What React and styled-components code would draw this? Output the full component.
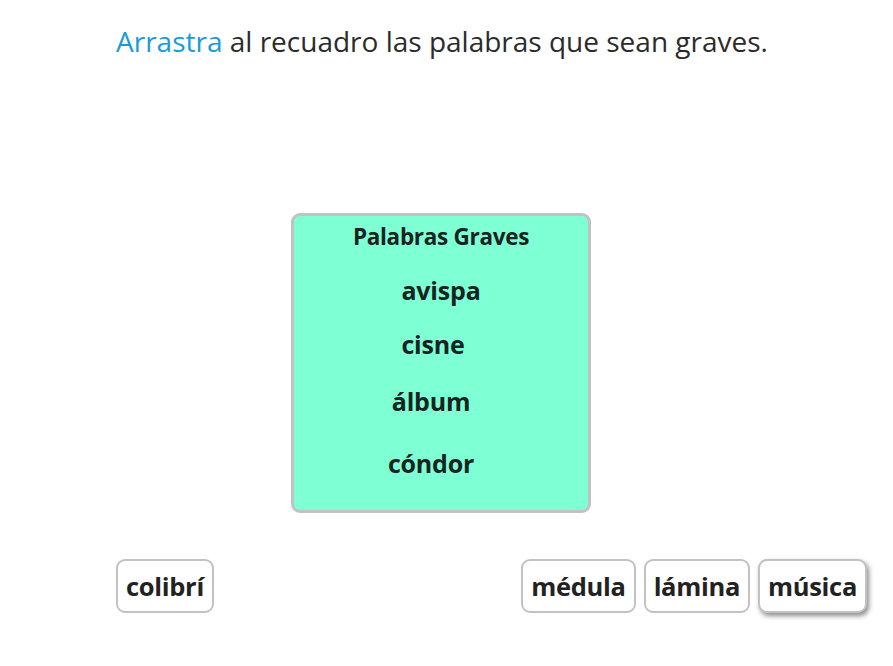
import React from "react";
import styled, { createGlobalStyle } from "styled-components";

const Global = createGlobalStyle`
  html, body { margin: 0; padding: 0; background: #ffffff; }
  body { font-family: "Open Sans", "Noto Sans", sans-serif; }
`;

const Page = styled.div`
  width: 893px;
  height: 666px;
  box-sizing: border-box;
  padding: 20px 26px 0 116px;
  display: flex;
  flex-direction: column;
`;

const Title = styled.h1`
  margin: 0;
  font-size: 28px;
  font-weight: 400;
  line-height: 42px;
  color: #2b2b2b;
`;

const Accent = styled.span`
  color: #1a9ad9;
`;

const BoxArea = styled.div`
  margin-top: 151px;
  margin-left: 175px;
`;

const DropBox = styled.div`
  width: 300px;
  height: 300px;
  box-sizing: border-box;
  border: 3px solid #c2c2c2;
  border-radius: 9px;
  background: #7fffd4;
  display: flex;
  flex-direction: column;
  align-items: center;
  padding-top: 6px;
  color: #17241f;
`;

const BoxTitle = styled.div`
  font-size: 22.5px;
  font-weight: 700;
  line-height: 30px;
  letter-spacing: -0.3px;
`;

const Word = styled.div`
  font-size: 25px;
  font-weight: 700;
  line-height: 34px;
  letter-spacing: -0.2px;
  margin-top: ${(p) => p.$mt}px;
  margin-right: ${(p) => p.$shift}px;
`;

const ChipRow = styled.div`
  margin-top: 46px;
  display: flex;
  justify-content: space-between;
  align-items: flex-start;
`;

const ChipGroup = styled.div`
  display: flex;
  gap: 8px;
`;

const Chip = styled.div`
  height: 54px;
  box-sizing: border-box;
  padding: 0 8px;
  border: 2px solid #c2c2c2;
  border-radius: 9px;
  background: #fff;
  display: flex;
  align-items: center;
  font-size: 25.5px;
  font-weight: 700;
  color: #222;
  letter-spacing: -0.3px;
  box-shadow: ${(p) => (p.$lifted ? "2px 3px 5px rgba(0,0,0,0.45)" : "none")};
`;

export default function App() {
  return (
    <>
      <Global />
      <Page>
        <Title>
          <Accent>Arrastra</Accent> al recuadro las palabras que sean graves.
        </Title>
        <BoxArea>
          <DropBox>
            <BoxTitle>Palabras Graves</BoxTitle>
            <Word $mt={21} $shift={0}>avispa</Word>
            <Word $mt={20} $shift={16}>cisne</Word>
            <Word $mt={23} $shift={20}>álbum</Word>
            <Word $mt={28} $shift={20}>cóndor</Word>
          </DropBox>
        </BoxArea>
        <ChipRow>
          <Chip>colibrí</Chip>
          <ChipGroup>
            <Chip>médula</Chip>
            <Chip>lámina</Chip>
            <Chip $lifted>música</Chip>
          </ChipGroup>
        </ChipRow>
      </Page>
    </>
  );
}
